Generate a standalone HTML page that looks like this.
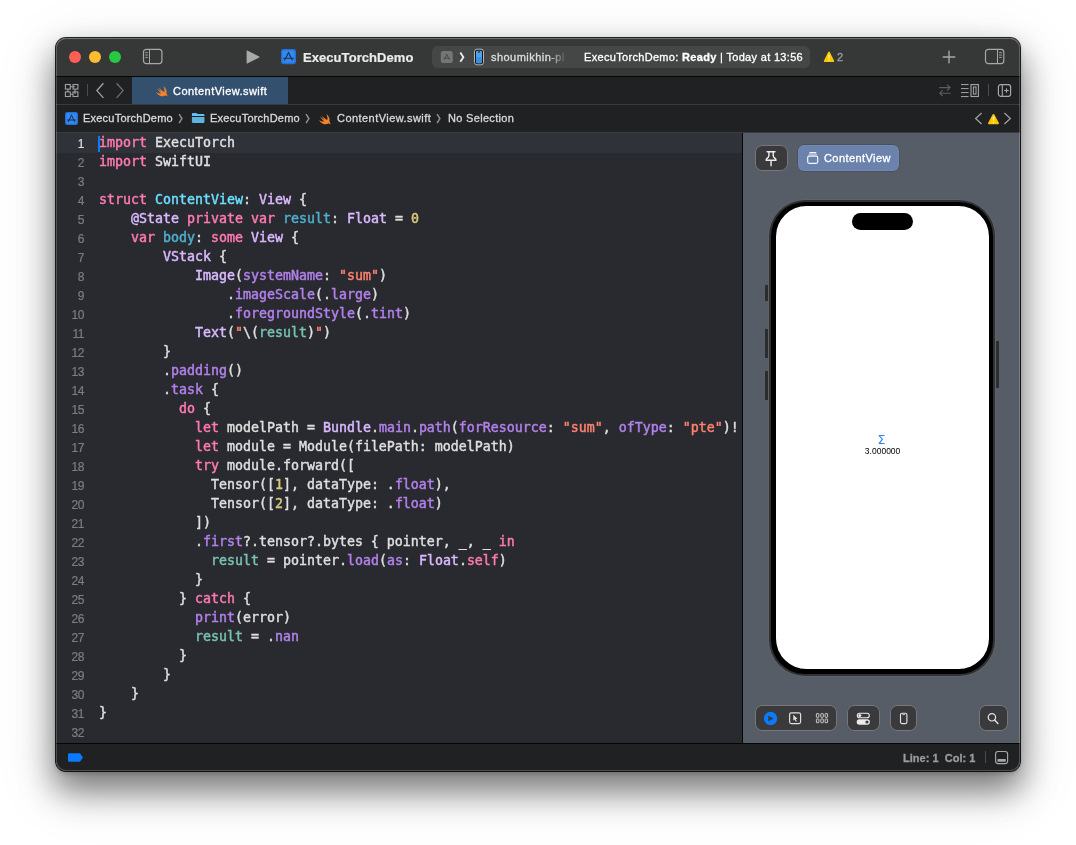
<!DOCTYPE html>
<html lang="en">
<head>
<meta charset="utf-8">
<title>ExecuTorchDemo — ContentView.swift</title>
<style>
*{box-sizing:border-box;margin:0;padding:0}
html,body{width:1076px;height:845px;overflow:hidden;background:#fff}
body{position:relative;font-family:"Liberation Sans",sans-serif;color:#dfdfe0;-webkit-font-smoothing:antialiased}
.abs{position:absolute}
#shadow{position:absolute;left:56px;top:38px;width:964px;height:733px;border-radius:10px;
  box-shadow:0 0 0 1px rgba(0,0,0,.85),0 20px 36px 0 rgba(0,0,0,.38),0 14px 28px 2px rgba(0,0,0,.19),0 16px 60px 10px rgba(0,0,0,.08),0 2px 5px rgba(0,0,0,.22)}
#win{position:absolute;left:56px;top:38px;width:964px;height:733px;border-radius:10px;overflow:hidden;background:#292a30;will-change:transform}
#hl{position:absolute;left:56px;top:38px;width:964px;height:733px;border-radius:10px;pointer-events:none;
  box-shadow:inset 0 0 0 1px rgba(255,255,255,.2),inset 0 1px 0 rgba(255,255,255,.12)}
/* coordinates inside #win are page coords minus (56,38) */
#titlebar{left:0;top:0;width:964px;height:38px;background:#363838}
#tline{left:0;top:38px;width:964px;height:1px;background:#050606}
#tabbar{left:0;top:39px;width:964px;height:27px;background:#1f2122}
#tabsep{left:0;top:66px;width:964px;height:1px;background:#3a3c3d}
#crumbs{left:0;top:67px;width:964px;height:27px;background:#1f2122}
#crumbsep{left:0;top:94px;width:964px;height:1px;background:#3a3c3d}
#editor{left:0;top:95px;width:686px;height:610px;background:#292a30}
#divider{left:686px;top:95px;width:1px;height:610px;background:#060607}
#preview{left:687px;top:95px;width:277px;height:610px;background:#575d67}
#statussep{left:0;top:705px;width:964px;height:1px;background:#050506}
#status{left:0;top:706px;width:964px;height:27px;background:#1f2122}
#gutter{left:0;top:1px;width:28px;text-align:right;font-size:12px;letter-spacing:-.45px;color:#7d7d82;font-family:"Liberation Sans",sans-serif}
#gutter div{height:19px;line-height:21px}
#gutter .cur{color:#e0e0e1}
#gutter{-webkit-text-stroke:.2px}
#code{left:43px;top:0;font-family:"DejaVu Sans Mono","Liberation Mono",monospace;font-size:13.29px;color:#dfdfe0;-webkit-text-stroke:.45px}
#code div{height:19px;line-height:19px;white-space:pre}
#code i{font-style:normal}
.k{color:#ff7ab2}.t{color:#6bdfff}.d{color:#4eb0cc}.s{color:#dabaff}.f{color:#b281eb}.r{color:#78c2b3}.q{color:#ff8170}.n{color:#d9c97c}
.btn{border-radius:7px;background:#3a3a3c;box-shadow:inset 0 0 0 1px #74777b}
.tl{width:12px;height:12px;border-radius:50%;top:13px}
.ui{font-size:11px;white-space:nowrap;line-height:14px;-webkit-text-stroke:.3px}
</style>
</head>
<body>
<div id="shadow"></div>
<div id="win">
  <div id="titlebar" class="abs">
    <div class="abs tl" style="left:13px;background:#ff5f57"></div>
    <div class="abs tl" style="left:33px;background:#febc2e"></div>
    <div class="abs tl" style="left:53px;background:#28c840"></div>
    <!-- sidebar toggle -->
    <svg class="abs" style="left:86px;top:10px" width="22" height="18" viewBox="0 0 22 18">
      <rect x="1.5" y="1.3" width="18.4" height="14.3" rx="2.8" fill="none" stroke="#a8a8a9" stroke-width="1.2"/>
      <line x1="7.5" y1="1.3" x2="7.5" y2="15.6" stroke="#a8a8a9" stroke-width="1"/>
      <path d="M3.2 4.6h2.7M3.2 7h2.7M3.2 9.4h2.7" stroke="#a8a8a9" stroke-width=".9"/>
    </svg>
    <!-- run -->
    <svg class="abs" style="left:189px;top:11px" width="16" height="16" viewBox="0 0 16 16">
      <path d="M2.3 1.6 L14.2 7.6 Q14.9 8 14.2 8.4 L2.3 14.4 Q1.6 14.7 1.6 13.9 L1.6 2.1 Q1.6 1.3 2.3 1.6Z" fill="#a9a9aa"/>
    </svg>
    <!-- app icon -->
    <svg class="abs" style="left:225px;top:11px" width="16" height="16" viewBox="0 0 16 16">
      <rect x="0" y="0" width="15" height="15.2" rx="2.4" fill="#2a70d2"/>
      <rect x="1.5" y="1.4" width="12" height="12.2" rx="1.2" fill="#2f8bfb"/>
      <path d="M7.5 3.4 L3.7 11.3 M7.5 3.4 L11.3 11.3 M2.6 9.3 H12.4" stroke="#222d3d" stroke-width="1.1" fill="none" stroke-linecap="round"/>
    </svg>
    <div class="abs" style="left:247px;top:12px;font-size:13px;font-weight:bold;line-height:16px;color:#ebebec;letter-spacing:.06px;white-space:nowrap;-webkit-text-stroke:.2px">ExecuTorchDemo</div>
    <!-- activity pill -->
    <div class="abs" style="left:376px;top:8px;width:378px;height:22px;border-radius:6px;background:#454747;overflow:hidden">
      <svg class="abs" style="left:8px;top:5px" width="13" height="13" viewBox="0 0 13 13">
        <rect x="0.8" y="0.1" width="12" height="12" rx="2.4" fill="#747575"/>
        <path d="M6.8 3.4 L4.5 8.3 M6.8 3.4 L9.1 8.3 M3.9 7.2 H9.7" stroke="#4b4c4c" stroke-width="1" fill="none" stroke-linecap="round"/>
      </svg>
      <svg class="abs" style="left:27px;top:5px" width="7" height="12" viewBox="0 0 7 12">
        <path d="M1.3 1.6 L4.4 6.2 L1.3 10.8" stroke="#ededed" stroke-width="1.8" fill="none"/>
      </svg>
      <svg class="abs" style="left:41px;top:2px" width="12" height="18" viewBox="0 0 12 18">
        <rect x="1.5" y="1.2" width="9" height="15.6" rx="2.5" fill="#151516" stroke="#c4c4c6" stroke-width="0.9"/>
        <rect x="3" y="2.8" width="6" height="12.4" rx="1.3" fill="#4da3ee"/>
        <rect x="3" y="9" width="6" height="6.2" rx="1.3" fill="#3d8fe0"/>
        <rect x="4.8" y="3.4" width="2.4" height="1" rx=".5" fill="#151516"/>
      </svg>
      <div class="abs ui" style="left:59px;top:4px;color:#dededf;letter-spacing:.46px;-webkit-mask-image:linear-gradient(90deg,#000 0,#000 58px,transparent 76px);mask-image:linear-gradient(90deg,#000 0,#000 58px,transparent 76px)">shoumikhin-pl</div>
      <div class="abs ui" style="left:152px;top:4px;color:#fff;letter-spacing:.32px">ExecuTorchDemo: <b>Ready</b> | Today at 13:56</div>
    </div>
    <!-- warnings -->
    <svg class="abs" style="left:766px;top:12px" width="14" height="14" viewBox="0 0 14 14">
      <path d="M7 1.6 Q7.5 1.6 7.8 2.1 L12.1 10.7 Q12.5 12 11.3 12.1 L2.7 12.1 Q1.5 12 1.9 10.7 L6.2 2.1 Q6.5 1.6 7 1.6Z" fill="#fdc500"/>
      <rect x="6.4" y="4.5" width="1.2" height="4.2" rx=".55" fill="#fff5cc"/>
      <circle cx="7" cy="10.3" r=".7" fill="#fff5cc"/>
    </svg>
    <div class="abs ui" style="left:781px;top:12px;color:#9c9c9e">2</div>
    <!-- plus -->
    <svg class="abs" style="left:886px;top:12px" width="14" height="14" viewBox="0 0 14 14">
      <path d="M7 1.2V12.8M1.2 7H12.8" stroke="#a6a6a7" stroke-width="1.4" stroke-linecap="round"/>
    </svg>
    <!-- inspector toggle -->
    <svg class="abs" style="left:927px;top:10px" width="22" height="18" viewBox="0 0 22 18">
      <rect x="2.5" y="1.3" width="18.3" height="14.3" rx="2.8" fill="none" stroke="#a8a8a9" stroke-width="1.2"/>
      <line x1="14.5" y1="1.3" x2="14.5" y2="15.6" stroke="#a8a8a9" stroke-width="1"/>
      <path d="M16.1 4.6h2.8M16.1 7h2.8M16.1 9.4h2.8" stroke="#a8a8a9" stroke-width=".9"/>
    </svg>
  </div>
  <div id="tline" class="abs"></div>
  <div id="tabbar" class="abs">
    <!-- related items grid -->
    <svg class="abs" style="left:8px;top:6px" width="16" height="15" viewBox="0 0 16 15">
      <g fill="none" stroke="#a0a0a1" stroke-width="1.1">
        <rect x="1.4" y="1.5" width="4.9" height="4.6"/><rect x="9" y="1.5" width="4.9" height="4.6"/>
        <rect x="1.4" y="8.9" width="4.9" height="4.6"/><rect x="9" y="8.9" width="4.9" height="4.6"/>
        <path d="M6.3 3.8H11M6.3 11.2H9M11 6.1V11M3.9 6.1V8.9"/>
      </g>
    </svg>
    <div class="abs" style="left:31px;top:7px;width:1px;height:12px;background:#4b4c4e"></div>
    <svg class="abs" style="left:39px;top:5px" width="10" height="18" viewBox="0 0 10 18"><path d="M8.4 1.3 L1.9 8.6 L8.4 15.9" stroke="#a4a4a5" stroke-width="1.3" fill="none"/></svg>
    <svg class="abs" style="left:59px;top:5px" width="10" height="18" viewBox="0 0 10 18"><path d="M1.6 1.3 L8.1 8.6 L1.6 15.9" stroke="#6f7071" stroke-width="1.3" fill="none"/></svg>
    <div class="abs" style="left:76px;top:0;width:156px;height:27px;background:#34506f"></div>
    <svg class="abs" style="left:99.3px;top:7.6px" width="14" height="13" viewBox="0 0 14 13">
      <path d="M8.2 1.1 C10.9 2.9 12.3 6 11.4 8.6 C12.3 9.7 12.5 10.9 12.3 11.5 C11.7 10.5 10.8 10.3 10.2 10.5 C8.9 11.3 6.9 11.5 5 10.7 C3.2 10 1.7 8.6 0.9 7.1 C2.4 8.2 4.3 8.9 6.2 8.5 C4.4 7.1 2.9 5.2 1.9 3.5 C3.3 4.8 5.2 6.2 6.6 7 C5.5 5.7 4.1 3.7 3.4 2.5 C5.1 4.1 7.4 6 9.3 7.1 C9.8 5.3 9.3 3 8.2 1.1Z" fill="#f5822a"/>
    </svg>
    <div class="abs ui" style="left:117px;top:7px;color:#fff;font-size:11px;letter-spacing:.45px">ContentView.swift</div>
    <!-- right controls -->
    <svg class="abs" style="left:881px;top:6px" width="16" height="15" viewBox="0 0 16 15">
      <path d="M2.2 4.6 H13 M10 1.6 L13 4.6 L10 7.6 M13.6 10.2 H2.8 M5.8 7.2 L2.8 10.2 L5.8 13.2" stroke="#5d5e60" stroke-width="1.1" fill="none"/>
    </svg>
    <svg class="abs" style="left:904px;top:6px" width="20" height="15" viewBox="0 0 20 15">
      <path d="M1 1.6H8.6M1 5.6H8.6M1 9.6H8.6M1 13.6H8.6" stroke="#a7a7a8" stroke-width="1" fill="none"/>
      <rect x="11" y="1.6" width="7.4" height="11.9" fill="none" stroke="#a7a7a8" stroke-width="1.1"/>
      <rect x="13.4" y="4" width="2.6" height="7.1" fill="none" stroke="#a7a7a8" stroke-width="1"/>
    </svg>
    <div class="abs" style="left:932px;top:7px;width:1px;height:12px;background:#4b4c4e"></div>
    <svg class="abs" style="left:941px;top:6px" width="15" height="15" viewBox="0 0 15 15">
      <rect x="1.4" y="1.7" width="12.2" height="11.6" rx="2.2" fill="none" stroke="#a7a7a8" stroke-width="1.2"/>
      <path d="M5.3 1.7V13.3" stroke="#a7a7a8" stroke-width="1.1"/>
      <path d="M9.5 5.2V9.8M7.2 7.5H11.8" stroke="#a7a7a8" stroke-width="1.1"/>
    </svg>
  </div>
  <div id="tabsep" class="abs"></div>
  <div id="crumbs" class="abs">
    <svg class="abs" style="left:9px;top:7px" width="14" height="14" viewBox="0 0 14 14">
      <rect x="0" y="0" width="13" height="13" rx="2.2" fill="#2a70d2"/>
      <rect x="1.3" y="1.3" width="10.4" height="10.4" rx="1" fill="#2f8bfb"/>
      <path d="M6.5 3.1 L3.4 9.7 M6.5 3.1 L9.6 9.7 M2.5 8 H10.5" stroke="#222d3d" stroke-width="1" fill="none" stroke-linecap="round"/>
    </svg>
    <div class="abs ui" style="left:27px;top:6px;color:#dadadb;letter-spacing:.22px">ExecuTorchDemo</div>
    <svg class="abs" style="left:122.4px;top:8px" width="6" height="11" viewBox="0 0 6 11"><path d="M1.1 1.2 L3.9 5.6 L1.1 10" stroke="#8f8f91" stroke-width="1.5" fill="none"/></svg>
    <svg class="abs" style="left:135px;top:7px" width="15" height="13" viewBox="0 0 15 13">
      <path d="M0.9 2 Q0.9 1 1.9 1 H5.2 Q5.8 1 6.2 1.5 L6.6 1.95 H12.4 Q13.45 1.95 13.45 3 V3.95 H0.9Z" fill="#63c3f5"/>
      <path d="M0.9 4.9 H13.45 V9.9 Q13.45 11 12.35 11 H2 Q0.9 11 0.9 9.9Z" fill="#5db2e0"/>
    </svg>
    <div class="abs ui" style="left:154px;top:6px;color:#dadadb;letter-spacing:.22px">ExecuTorchDemo</div>
    <svg class="abs" style="left:249px;top:8px" width="6" height="11" viewBox="0 0 6 11"><path d="M1.1 1.2 L3.9 5.6 L1.1 10" stroke="#8f8f91" stroke-width="1.5" fill="none"/></svg>
    <svg class="abs" style="left:262px;top:7.6px" width="14" height="13" viewBox="0 0 14 13">
      <path d="M8.2 1.1 C10.9 2.9 12.3 6 11.4 8.6 C12.3 9.7 12.5 10.9 12.3 11.5 C11.7 10.5 10.8 10.3 10.2 10.5 C8.9 11.3 6.9 11.5 5 10.7 C3.2 10 1.7 8.6 0.9 7.1 C2.4 8.2 4.3 8.9 6.2 8.5 C4.4 7.1 2.9 5.2 1.9 3.5 C3.3 4.8 5.2 6.2 6.6 7 C5.5 5.7 4.1 3.7 3.4 2.5 C5.1 4.1 7.4 6 9.3 7.1 C9.8 5.3 9.3 3 8.2 1.1Z" fill="#f5822a"/>
    </svg>
    <div class="abs ui" style="left:281px;top:6px;color:#dadadb;letter-spacing:.45px">ContentView.swift</div>
    <svg class="abs" style="left:380.4px;top:8px" width="6" height="11" viewBox="0 0 6 11"><path d="M1.1 1.2 L3.9 5.6 L1.1 10" stroke="#8f8f91" stroke-width="1.5" fill="none"/></svg>
    <div class="abs ui" style="left:392px;top:6px;color:#dadadb;letter-spacing:.32px">No Selection</div>
    <!-- issue navigation -->
    <svg class="abs" style="left:918px;top:7px" width="9" height="13" viewBox="0 0 9 13"><path d="M7.6 1 L1.6 6.5 L7.6 12" stroke="#a4a4a5" stroke-width="1.2" fill="none"/></svg>
    <svg class="abs" style="left:930.7px;top:8px" width="13" height="13" viewBox="0 0 13 13">
      <path d="M6.5 1 Q7.1 1 7.4 1.6 L11.9 9.9 Q12.3 11.2 11.1 11.3 L1.9 11.3 Q0.7 11.2 1.1 9.9 L5.6 1.6 Q5.9 1 6.5 1Z" fill="#fdc500"/>
      <rect x="5.95" y="3.8" width="1.1" height="4" rx=".5" fill="#fff7d6"/>
      <circle cx="6.5" cy="9.4" r=".7" fill="#fff7d6"/>
    </svg>
    <svg class="abs" style="left:947px;top:7px" width="9" height="13" viewBox="0 0 9 13"><path d="M1.4 1 L7.4 6.5 L1.4 12" stroke="#a4a4a5" stroke-width="1.2" fill="none"/></svg>
  </div>
  <div id="crumbsep" class="abs"></div>
  <div id="editor" class="abs">
    <div class="abs" style="left:0;top:0;width:686px;height:20px;background:#2f3239"></div>
    <div class="abs" style="left:42px;top:3px;width:2px;height:16px;background:#0a7aff"></div>
    <div id="gutter" class="abs">
<div class=cur>1</div>
<div>2</div>
<div>3</div>
<div>4</div>
<div>5</div>
<div>6</div>
<div>7</div>
<div>8</div>
<div>9</div>
<div>10</div>
<div>11</div>
<div>12</div>
<div>13</div>
<div>14</div>
<div>15</div>
<div>16</div>
<div>17</div>
<div>18</div>
<div>19</div>
<div>20</div>
<div>21</div>
<div>22</div>
<div>23</div>
<div>24</div>
<div>25</div>
<div>26</div>
<div>27</div>
<div>28</div>
<div>29</div>
<div>30</div>
<div>31</div>
<div>32</div>
    </div>
    <div id="code" class="abs">
<div><i class="k">import</i> ExecuTorch</div>
<div><i class="k">import</i> SwiftUI</div>
<div></div>
<div><i class="k">struct</i> <i class="t">ContentView</i>: <i class="s">View</i> {</div>
<div>    <i class="s">@State</i> <i class="k">private</i> <i class="k">var</i> <i class="d">result</i>: <i class="s">Float</i> = <i class="n">0</i></div>
<div>    <i class="k">var</i> <i class="d">body</i>: <i class="k">some</i> <i class="s">View</i> {</div>
<div>        <i class="s">VStack</i> {</div>
<div>            <i class="s">Image</i>(<i class="f">systemName</i>: <i class="q">"sum"</i>)</div>
<div>                .<i class="f">imageScale</i>(.<i class="f">large</i>)</div>
<div>                .<i class="f">foregroundStyle</i>(.<i class="f">tint</i>)</div>
<div>            <i class="s">Text</i>(<i class="q">"</i>\(<i class="r">result</i>)<i class="q">"</i>)</div>
<div>        }</div>
<div>        .<i class="f">padding</i>()</div>
<div>        .<i class="f">task</i> {</div>
<div>          <i class="k">do</i> {</div>
<div>            <i class="k">let</i> modelPath = <i class="s">Bundle</i>.<i class="f">main</i>.<i class="f">path</i>(<i class="f">forResource</i>: <i class="q">"sum"</i>, <i class="f">ofType</i>: <i class="q">"pte"</i>)!</div>
<div>            <i class="k">let</i> module = Module(filePath: modelPath)</div>
<div>            <i class="k">try</i> module.forward([</div>
<div>              Tensor([<i class="n">1</i>], dataType: .<i class="f">float</i>),</div>
<div>              Tensor([<i class="n">2</i>], dataType: .<i class="f">float</i>)</div>
<div>            ])</div>
<div>            .<i class="f">first</i>?.tensor?.bytes { pointer, _, _ <i class="k">in</i></div>
<div>              <i class="r">result</i> = pointer.<i class="f">load</i>(<i class="f">as</i>: <i class="s">Float</i>.<i class="k">self</i>)</div>
<div>            }</div>
<div>          } <i class="k">catch</i> {</div>
<div>            <i class="f">print</i>(error)</div>
<div>            <i class="r">result</i> = .<i class="f">nan</i></div>
<div>          }</div>
<div>        }</div>
<div>    }</div>
<div>}</div>
<div></div>
    </div>
  </div>
  <div id="divider" class="abs"></div>
  <div id="preview" class="abs">
    <!-- pin -->
    <div class="abs btn" style="left:12px;top:12px;width:33px;height:26px"></div>
    <svg class="abs" style="left:21px;top:17px" width="15" height="17" viewBox="0 0 15 17">
      <path d="M3.1 1.8 H11 M4.9 1.8 V5.4 Q4.9 7 3.3 8.1 Q2.1 9.1 2.1 10.3 H12 Q12 9.1 10.8 8.1 Q9.2 7 9.2 5.4 V1.8 M7.05 10.3 V15.7" stroke="#efeff0" stroke-width="1.4" fill="none" stroke-linecap="round" stroke-linejoin="round"/>
    </svg>
    <!-- preview selector -->
    <div class="abs" style="left:55px;top:12px;width:101px;height:26px;border-radius:6px;background:#6b82ad;box-shadow:0 0 0 .5px rgba(40,50,70,.55),inset 0 0 0 .5px rgba(255,255,255,.12)"></div>
    <svg class="abs" style="left:63px;top:17px" width="14" height="16" viewBox="0 0 14 16">
      <rect x="1.7" y="6.1" width="10" height="7.2" rx="1.5" fill="none" stroke="#f4f6fa" stroke-width="1.2"/>
      <path d="M3.9 2.3 H9.9 L11.5 5.5 H2 Z" fill="#dfe5f0" fill-opacity=".55"/>
      <path d="M3.9 2.5 H9.9" stroke="#f4f6fa" stroke-width="1" stroke-linecap="round"/>
    </svg>
    <div class="abs ui" style="left:81px;top:18px;color:#fff;letter-spacing:.42px;-webkit-text-stroke:.32px">ContentView</div>
    <!-- device -->
    <div class="abs" style="left:21.6px;top:152.2px;width:3.3px;height:15.8px;background:#2c2d2f"></div>
    <div class="abs" style="left:21.6px;top:195.5px;width:3.3px;height:29.3px;background:#2c2d2f"></div>
    <div class="abs" style="left:21.6px;top:237.6px;width:3.3px;height:29.4px;background:#2c2d2f"></div>
    <div class="abs" style="left:253px;top:207.9px;width:2.9px;height:47px;background:#2c2d2f"></div>
    <div class="abs" style="left:25.9px;top:67px;width:226.1px;height:476px;border-radius:36px;background:#2f3032;box-shadow:0 0 0 .6px rgba(120,122,126,.35)"></div>
    <div class="abs" style="left:27.9px;top:69px;width:222.1px;height:472px;border-radius:34px;background:#000"></div>
    <div class="abs" style="left:33.2px;top:73px;width:212.8px;height:463px;border-radius:30.5px;background:#fff"></div>
    <div class="abs" style="left:109px;top:79.8px;width:61px;height:17.4px;border-radius:8.7px;background:#000"></div>
    <div class="abs" style="left:32.2px;top:300px;width:212.6px;text-align:center;font-size:12.5px;line-height:14px;color:#2f7ff6;font-family:'DejaVu Sans','Liberation Sans',sans-serif">Σ</div>
    <div class="abs" style="left:33.3px;top:312.6px;width:212.6px;text-align:center;font-size:8.5px;line-height:10px;color:#000">3.000000</div>
    <!-- canvas toolbar -->
    <div class="abs btn" style="left:12px;top:572px;width:82px;height:26px"></div>
    <svg class="abs" style="left:20px;top:578px" width="15" height="15" viewBox="0 0 15 15">
      <circle cx="7.55" cy="7.45" r="6.65" fill="#0a7aff"/>
      <path d="M5.5 4.9 L10.2 7.5 L5.5 10.1Z" fill="#3a3a3c" stroke="#3a3a3c" stroke-width=".5" stroke-linejoin="round"/>
    </svg>
    <svg class="abs" style="left:44px;top:578px" width="15" height="15" viewBox="0 0 15 15">
      <rect x="2.6" y="1.8" width="11" height="10.8" rx="1.8" fill="none" stroke="#e2e2e3" stroke-width="1.15"/>
      <path d="M6.3 3.7 V9.6 L7.7 8.4 L8.8 10.7 L9.8 10.2 L8.7 8 H10.6Z" fill="#e2e2e3"/>
    </svg>
    <svg class="abs" style="left:71px;top:578px" width="15" height="15" viewBox="0 0 15 15">
      <g fill="none" stroke="#dcdcdd" stroke-width=".9">
        <rect x="2.4" y="2.6" width="2.5" height="3.7" rx=".5"/><rect x="6.8" y="2.6" width="2.5" height="3.7" rx=".5"/><rect x="11.1" y="2.6" width="2.5" height="3.7" rx=".5"/>
        <rect x="2.4" y="8" width="2.5" height="3.7" rx=".5"/><rect x="6.8" y="8" width="2.5" height="3.7" rx=".5"/><rect x="11.1" y="8" width="2.5" height="3.7" rx=".5"/>
      </g>
    </svg>
    <div class="abs btn" style="left:104px;top:572px;width:33px;height:26px"></div>
    <svg class="abs" style="left:112px;top:578px" width="17" height="15" viewBox="0 0 17 15">
      <rect x="2.3" y="2.2" width="12" height="4.6" rx="2.3" fill="none" stroke="#ebebec" stroke-width="1.1"/>
      <circle cx="4.8" cy="4.5" r="1.5" fill="#ebebec"/>
      <rect x="1.7" y="8.3" width="13.2" height="5.4" rx="2.7" fill="#ebebec"/>
      <circle cx="12" cy="11" r="1.6" fill="#3b3c3f"/>
    </svg>
    <div class="abs btn" style="left:147px;top:572px;width:27px;height:26px"></div>
    <svg class="abs" style="left:155px;top:577px" width="11" height="16" viewBox="0 0 11 16">
      <rect x="2.5" y="3.2" width="6.4" height="10.4" rx="1.5" fill="none" stroke="#e4e4e5" stroke-width="1.15"/>
      <path d="M4.7 4.6 H6.7" stroke="#e4e4e5" stroke-width=".8" stroke-linecap="round"/>
    </svg>
    <div class="abs btn" style="left:236px;top:572px;width:29px;height:26px"></div>
    <svg class="abs" style="left:243px;top:579px" width="14" height="14" viewBox="0 0 14 14">
      <circle cx="5.9" cy="5.3" r="3.7" fill="none" stroke="#e6e6e7" stroke-width="1.2"/>
      <path d="M8.6 8 L11.9 11.5" stroke="#e6e6e7" stroke-width="1.35" stroke-linecap="round"/>
    </svg>
  </div>
  <div id="statussep" class="abs"></div>
  <div id="status" class="abs">
    <svg class="abs" style="left:11px;top:8px" width="17" height="11" viewBox="0 0 17 11">
      <path d="M2.2 1.2 H12.2 Q12.9 1.2 13.3 1.7 L15.6 4.9 Q16 5.5 15.6 6.1 L13.3 9.3 Q12.9 9.8 12.2 9.8 H2.2 Q1 9.8 1 8.6 V2.4 Q1 1.2 2.2 1.2Z" fill="#0a7aff"/>
    </svg>
    <div class="abs ui" style="left:847px;top:7px;color:#9c9c9e;font-weight:bold;white-space:pre;letter-spacing:.02px">Line: 1  Col: 1</div>
    <div class="abs" style="left:929px;top:7px;width:1px;height:12px;background:#4b4c4e"></div>
    <svg class="abs" style="left:938px;top:6px" width="15" height="15" viewBox="0 0 15 15">
      <rect x="1.6" y="1.5" width="12" height="12.1" rx="2.5" fill="none" stroke="#a8a8a9" stroke-width="1.15"/>
      <rect x="3.4" y="9.1" width="8.4" height="2.6" rx=".7" fill="#a8a8a9"/>
    </svg>
  </div>
</div>
<div id="hl"></div>
</body>
</html>
